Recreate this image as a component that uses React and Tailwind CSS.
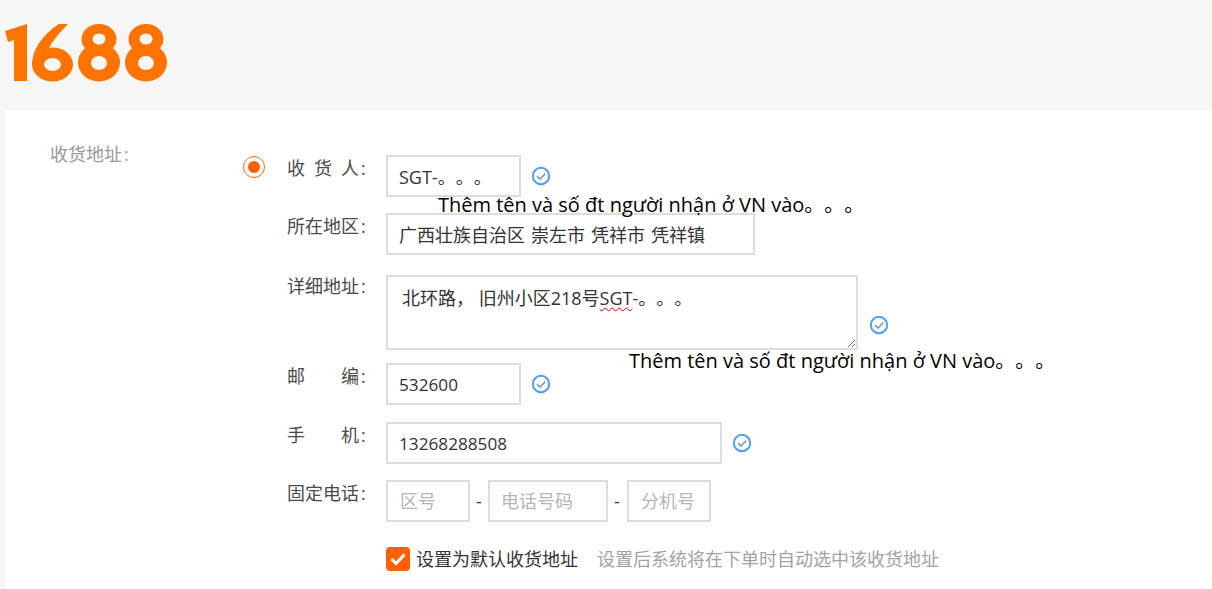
const FONT = "font-['Open_Sans','Noto_Sans_CJK_SC',sans-serif] [text-spacing-trim:space-all]";

function Logo() {
  return (
    <svg width="165" height="58" viewBox="5 24 165 58" className="block">
      <g fill="#ff7300">
        <path d="M5 31 L27 24 L27 81 L14 81 L14 40 L8 42 Z" />
        <path d="M68 24 L59 24 C45 33 33 47 32 64 L44 64 C45 50 55 37 68 24 Z" />
        <ellipse cx="52.5" cy="64.5" rx="20.5" ry="17" />
        <ellipse cx="99" cy="39" rx="17.5" ry="15" />
        <ellipse cx="99" cy="62.5" rx="21" ry="19" />
        <ellipse cx="146" cy="39" rx="17.5" ry="15" />
        <ellipse cx="146" cy="62.5" rx="21" ry="19" />
      </g>
      <g fill="#f6f6f6">
        <ellipse cx="52.5" cy="64.5" rx="8.5" ry="6.5" />
        <ellipse cx="99" cy="39" rx="6.5" ry="5.5" />
        <ellipse cx="99" cy="63" rx="8" ry="7" />
        <ellipse cx="146" cy="39" rx="6.5" ry="5.5" />
        <ellipse cx="146" cy="63" rx="8" ry="7" />
      </g>
    </svg>
  );
}

function Check() {
  return (
    <svg width="20" height="20" viewBox="0 0 20 20" fill="none" className="shrink-0">
      <circle cx="10" cy="10" r="8.2" stroke="#4f9ff5" strokeWidth="2" />
      <path d="M6 10.2 L9 13 L14.2 7.6" stroke="#7d9cc4" strokeWidth="1.7" />
    </svg>
  );
}

const Colon = () => <span className="ml-[2px]">:</span>;

function Row({ label, className = "", labelClass = "", children }) {
  return (
    <div className={`flex ${className}`}>
      <div className={`w-[99px] shrink-0 text-[18px] leading-[26px] text-[#4a4a4a] ${labelClass}`}>{label}<Colon /></div>
      {children}
    </div>
  );
}

function Field({ value, width, placeholder, size = "text-[18px]", pad = "pl-[11px]" }) {
  return (
    <input
      readOnly
      value={value}
      placeholder={placeholder}
      className={`${width} ${size} ${pad} h-[42px] border-2 border-[#dddddd] bg-white text-[#333333] placeholder:text-[#b5b5b5] outline-none`}
    />
  );
}

const NOTE = "Thêm tên và số đt người nhận ở VN vào。。。";

export default function App() {
  return (
    <div lang="zh-CN" className={`${FONT} h-[589px] w-[1212px] overflow-hidden bg-[#f6f6f6]`}>
      <header className="h-[111px] pl-[5px] pt-[24px]">
        <Logo />
      </header>
      <main className="ml-[5px] flex h-[478px] bg-white pt-[32px]">
        <div className="w-[238px] shrink-0 pl-[45px] text-[18px] leading-[22px] text-[#999999]">收货地址<Colon /></div>
        <div className="w-[44px] shrink-0 pt-[13px]">
          <div className="flex h-[22px] w-[22px] items-center justify-center rounded-full border border-[#ff6a1a]">
            <div className="h-[12px] w-[12px] rounded-full bg-[#ff6000]" />
          </div>
        </div>
        <div className="relative flex-1 pt-[12px]">
          <Row label={<><span className="tracking-[9px]">收货</span>人</>}>
            <Field value="SGT-。。。" width="w-[135px]" />
            <div className="ml-[10px] mt-[11px]"><Check /></div>
          </Row>
          <div className="pointer-events-none absolute left-[151px] top-[48px] whitespace-nowrap text-[20px] leading-[28px] text-black">{NOTE}</div>
          <Row label="所在地区" className="mt-[16px]">
            <Field value="广西壮族自治区 崇左市 凭祥市 凭祥镇" width="w-[369px]" size="text-[18px] [word-spacing:1.3px]" />
          </Row>
          <Row label="详细地址" className="mt-[20px]" labelClass="-mt-[2px]">
            <div className="h-[75px] w-[472px] resize overflow-hidden border-2 border-[#dddddd] pl-[14px] pt-[8px] text-[18px] leading-[26px] text-[#333333]">
              北环路， 旧州小区218号<span className="underline decoration-wavy decoration-[#e00000] decoration-1 underline-offset-2">SGT</span>-。。。
            </div>
            <div className="ml-[11px] mt-[40px]"><Check /></div>
          </Row>
          <div className="pointer-events-none absolute left-[342px] top-[204px] whitespace-nowrap text-[20px] leading-[28px] text-black">{NOTE}</div>
          <Row label={<><span className="tracking-[36px]">邮</span>编</>} className="mt-[13px]">
            <Field value="532600" width="w-[135px]" size="text-[17.2px]" />
            <div className="ml-[10px] mt-[11px]"><Check /></div>
          </Row>
          <Row label={<><span className="tracking-[36px]">手</span>机</>} className="mt-[17px]">
            <Field value="13268288508" width="w-[336px]" size="text-[17.2px]" />
            <div className="ml-[10px] mt-[11px]"><Check /></div>
          </Row>
          <Row label="固定电话" className="mt-[16px]">
            <div className="flex items-center">
              <Field value="" placeholder="区号" width="w-[84px]" pad="pl-[12px]" />
              <span className="mx-[6px] w-[6px] text-[18px] text-[#333333]">-</span>
              <Field value="" placeholder="电话号码" width="w-[120px]" pad="pl-[11px]" />
              <span className="mx-[6px] w-[7px] text-[18px] text-[#333333]">-</span>
              <Field value="" placeholder="分机号" width="w-[84px]" pad="pl-[12px]" />
            </div>
          </Row>
          <div className="ml-[99px] mt-[25px] flex items-center text-[18px] leading-[24px]">
            <div className="flex h-[24px] w-[24px] items-center justify-center rounded-[4px] bg-[#ff6000]">
              <svg width="18" height="16" viewBox="0 0 18 16" fill="none">
                <path d="M2.5 8 L7 12.5 L15.5 3.5" stroke="#ffffff" strokeWidth="3" />
              </svg>
            </div>
            <span className="ml-[6px] text-[#333333]">设置为默认收货地址</span>
            <span className="ml-[19px] text-[#a3a3a3]">设置后系统将在下单时自动选中该收货地址</span>
          </div>
        </div>
      </main>
    </div>
  );
}
